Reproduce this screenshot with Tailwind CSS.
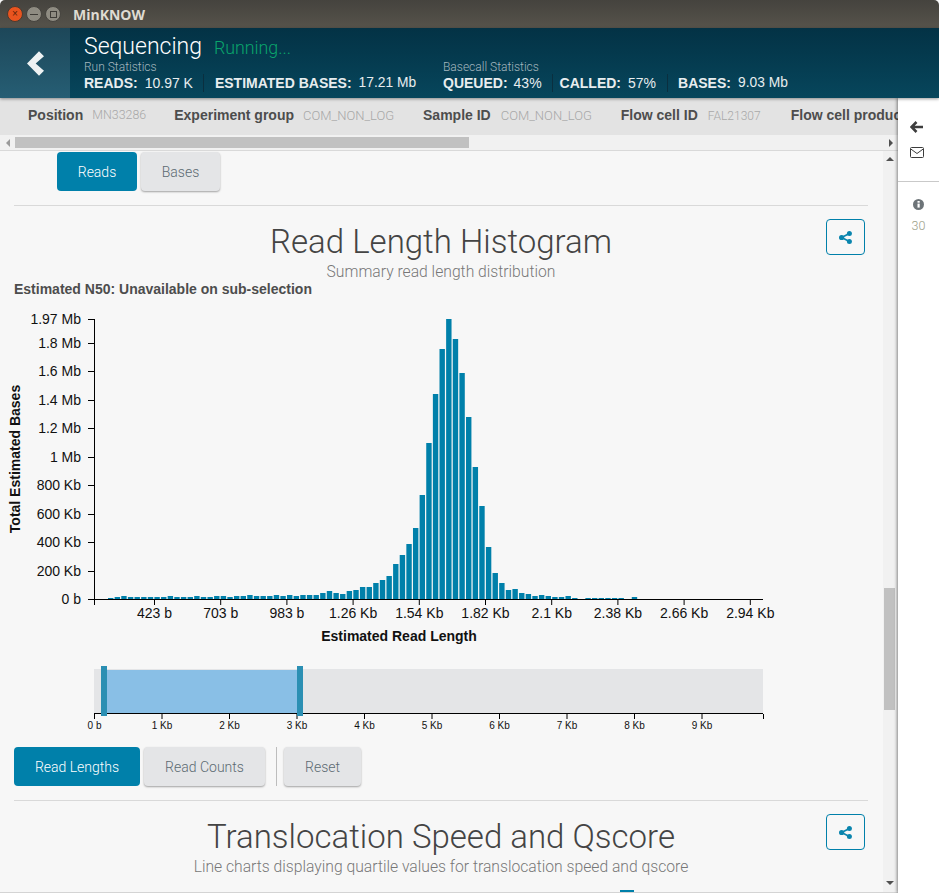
<!DOCTYPE html>
<html lang="en">
<head>
<meta charset="UTF-8">
<title>MinKNOW</title>
<script src="https://cdn.jsdelivr.net/npm/@tailwindcss/browser@4"></script>
</head>
<body class="w-[939px] h-[893px] overflow-hidden flex flex-col bg-[#f7f7f7] font-['Liberation_Sans',sans-serif]">

<!-- Window title bar -->
<div class="h-[28px] shrink-0 flex items-center pl-[7px] bg-gradient-to-b from-[#45433e] to-[#56534b] rounded-t-[5px]">
  <div class="w-[16px] h-[16px] rounded-full bg-[#e9541f] border border-[#4a3a30] flex items-center justify-center text-[10px] leading-none text-[#5a2208]">×</div>
  <div class="w-[16px] h-[16px] rounded-full bg-[#8f8c82] border border-[#45433e] ml-[3px] flex items-center justify-center"><div class="w-[8px] h-[1px] bg-[#3e3c37]"></div></div>
  <div class="w-[16px] h-[16px] rounded-full bg-[#8f8c82] border border-[#45433e] ml-[3px] flex items-center justify-center"><div class="w-[7px] h-[7px] border border-[#3e3c37]"></div></div>
  <span class="ml-[12px] text-[14px] font-bold text-[#dfdbd2] font-['Open_Sans',sans-serif]">MinKNOW</span>
</div>

<!-- Run header -->
<div class="relative z-20 h-[70px] shrink-0 flex bg-gradient-to-b from-[#033245] to-[#07465c] shadow-[0_1px_3px_rgba(0,0,0,0.4)] text-[#e8edef]">
  <div class="w-[70px] shrink-0 flex items-center justify-center pl-[1px] bg-gradient-to-b from-[#1d4759] to-[#265e74]">
    <svg width="17" height="25" viewBox="82 150 51 74"><polygon points="82,187 118,150 133,165 108,187 133,209 118,224" fill="#eef2f3"/></svg>
  </div>
  <div class="pl-[14px] pt-[2px] flex-1">
    <div class="flex items-baseline font-[Roboto] font-light h-[31px]">
      <span class="text-[23px] text-white">Sequencing</span>
      <span class="ml-[12px] text-[17.8px] text-[#0aa56c]">Running...</span>
    </div>
    <div class="flex">
      <div class="w-[359px]">
        <div class="h-[11px] text-[12px] leading-[13px] text-[#a4b7bf] font-[Roboto] font-light">Run Statistics</div>
        <div class="flex items-center h-[22px] text-[14px]">
          <b>READS:</b><span class="ml-[7px]">10.97 K</span>
          <div class="w-px h-[18px] bg-[#0a2f3f] ml-[10px] mr-[11px]"></div>
          <b>ESTIMATED BASES:</b><span class="ml-[7px] text-[13.8px]">17.21 Mb</span>
        </div>
      </div>
      <div>
        <div class="h-[11px] text-[12px] leading-[13px] text-[#a4b7bf] font-[Roboto] font-light">Basecall Statistics</div>
        <div class="flex items-center h-[22px] text-[14px]">
          <b>QUEUED:</b><span class="ml-[6px]">43%</span>
          <div class="w-px h-[18px] bg-[#0a2f3f] ml-[10px] mr-[7px]"></div>
          <b>CALLED:</b><span class="ml-[7px]">57%</span>
          <div class="w-px h-[18px] bg-[#0a2f3f] ml-[11px] mr-[10px]"></div>
          <b>BASES:</b><span class="ml-[7px] text-[13.8px]">9.03 Mb</span>
        </div>
      </div>
    </div>
  </div>
</div>

<div class="flex flex-1 min-h-0">
  <!-- Main column -->
  <div class="w-[898px] shrink-0 flex flex-col min-h-0 border-b border-[#d4d4d4]">
    <!-- Run info strip -->
    <div class="h-[37px] shrink-0 flex items-center pl-[28px] pb-[2px] bg-[#e3e3e3] overflow-hidden whitespace-nowrap text-[14px]">
      <b class="shrink-0 text-[#4d4d4d]">Position</b><span class="shrink-0 ml-[9px] w-[54px] text-[12.4px] text-[#a8a8a8] font-[Roboto] font-light">MN33286</span>
      <b class="shrink-0 ml-[28px] text-[#4d4d4d]">Experiment group</b><span class="shrink-0 ml-[9px] w-[92px] text-[13px] text-[#a8a8a8] font-[Roboto] font-light">COM_NON_LOG</span>
      <b class="shrink-0 ml-[28px] text-[#4d4d4d]">Sample ID</b><span class="shrink-0 ml-[10px] w-[92px] text-[13px] text-[#a8a8a8] font-[Roboto] font-light">COM_NON_LOG</span>
      <b class="shrink-0 ml-[28px] text-[#4d4d4d]">Flow cell ID</b><span class="shrink-0 ml-[10px] w-[54px] text-[12px] text-[#a8a8a8] font-[Roboto] font-light">FAL21307</span>
      <b class="shrink-0 ml-[29px] text-[#4d4d4d]">Flow cell product code</b>
    </div>
    <!-- Horizontal scrollbar -->
    <div class="h-[16px] shrink-0 flex items-center bg-[#f1f1f1] border-b border-[#d9d9d9]">
      <div class="w-[15px] flex justify-center"><div class="border-y-[4px] border-y-transparent border-r-[4px] border-r-[#9a9a9a]"></div></div>
      <div class="w-[454px] h-[11px] bg-[#c1c1c1]"></div>
      <div class="flex-1"></div>
      <div class="w-[15px] flex justify-center"><div class="border-y-[4px] border-y-transparent border-l-[4px] border-l-[#505050]"></div></div>
    </div>

    <div class="flex flex-1 min-h-0">
      <!-- Scrolled content -->
      <div class="w-[883px] shrink-0 overflow-hidden pl-[14px] pr-[15px]">
        <div class="flex gap-[4px] pl-[43px] pt-[1px] pb-[14px] border-b border-[#d9d9d9] text-[14px] font-[Roboto] font-light">
          <button class="w-[80px] h-[39px] pt-[2px] rounded-[4px] bg-[#0080aa] text-white">Reads</button>
          <button class="w-[79px] h-[39px] pt-[2px] rounded-[4px] bg-[#e4e5e7] text-[#5c6a72] shadow-[0_1px_2px_rgba(0,0,0,0.35)]">Bases</button>
        </div>

        <!-- Read length histogram -->
        <div class="relative text-center font-[Roboto] font-light pt-[16px]">
          <h2 class="text-[33px] leading-[40px] text-[#444]">Read Length Histogram</h2>
          <p class="text-[15.7px] leading-[20px] text-[#777]">Summary read length distribution</p>
          <button class="absolute right-[3px] top-[13px] w-[39px] h-[36px] rounded-[4px] border border-[#0080aa] flex items-center justify-center">
            <svg width="13" height="13" viewBox="0 0 13 13" fill="#0a85ae"><circle cx="2.6" cy="6.5" r="2.6"/><circle cx="10.4" cy="2.5" r="2.5"/><circle cx="10.4" cy="10.5" r="2.5"/><path d="M2.6 6.5 L10.4 2.5 M2.6 6.5 L10.4 10.5" stroke="#0a85ae" stroke-width="1.6"/></svg>
          </button>
        </div>
        <div class="text-[14px] leading-[16px] font-bold text-[#4d4d4d] -mt-[1px]">Estimated N50: Unavailable on sub-selection</div>

        <!-- Chart coordinates are window x and y -->
        <svg id="chart" class="block mt-[8px] -ml-[14px]" width="883" height="442" viewBox="0 305 883 442"></svg>

        <div class="flex items-stretch h-[39px] text-[14px] font-[Roboto] font-light">
          <button class="w-[126px] pt-[2px] rounded-[4px] bg-[#0080aa] text-white">Read Lengths</button>
          <button class="w-[121px] pt-[2px] ml-[4px] rounded-[4px] bg-[#e4e5e7] text-[#5c6a72] shadow-[0_1px_2px_rgba(0,0,0,0.35)]">Read Counts</button>
          <div class="w-px bg-[#bdbdbd] ml-[11px]"></div>
          <button class="w-[77px] pt-[2px] ml-[7px] rounded-[4px] bg-[#e4e5e7] text-[#5c6a72] shadow-[0_1px_2px_rgba(0,0,0,0.35)]">Reset</button>
        </div>
        <div class="h-px bg-[#d9d9d9] mt-[14px]"></div>

        <!-- Translocation speed -->
        <div class="relative text-center font-[Roboto] font-light pt-[16px]">
          <h2 class="text-[33px] leading-[40px] text-[#444]">Translocation Speed and Qscore</h2>
          <p class="text-[15.7px] leading-[20px] text-[#777]">Line charts displaying quartile values for translocation speed and qscore</p>
          <button class="absolute right-[3px] top-[13px] w-[39px] h-[36px] rounded-[4px] border border-[#0080aa] flex items-center justify-center">
            <svg width="13" height="13" viewBox="0 0 13 13" fill="#0a85ae"><circle cx="2.6" cy="6.5" r="2.6"/><circle cx="10.4" cy="2.5" r="2.5"/><circle cx="10.4" cy="10.5" r="2.5"/><path d="M2.6 6.5 L10.4 2.5 M2.6 6.5 L10.4 10.5" stroke="#0a85ae" stroke-width="1.6"/></svg>
          </button>
          <div class="w-[14px] h-[3px] bg-[#0080aa] ml-[606px] mt-[13px]"></div>
        </div>
      </div>

      <!-- Vertical scrollbar -->
      <div class="relative w-[15px] shrink-0 bg-[#f1f1f1]">
        <div class="absolute left-[3px] top-[6px] border-x-[4px] border-x-transparent border-b-[4px] border-b-[#505050]"></div>
        <div class="absolute left-[1px] top-[437px] w-[11px] h-[122px] bg-[#c1c1c1]"></div>
        <div class="absolute left-[3px] bottom-[7px] border-x-[4px] border-x-transparent border-t-[4px] border-t-[#505050]"></div>
      </div>
    </div>
  </div>

  <!-- Right rail -->
  <div class="relative z-10 w-[41px] shrink-0 bg-white shadow-[-1px_0_3px_rgba(0,0,0,0.45)] flex flex-col items-center">
    <div class="h-[84px] w-full border-b border-[#c9c9c9] flex flex-col items-center pt-[23px] pr-[4px]">
      <svg width="14" height="12" viewBox="0 0 14 12"><path d="M6.5 1 L1.5 6 L6.5 11 M2 6 H13" fill="none" stroke="#3d3d3d" stroke-width="2.6"/></svg>
      <svg class="mt-[14px]" width="14" height="11" viewBox="0 0 14 11"><rect x="0.5" y="0.5" width="13" height="10" rx="1" fill="none" stroke="#3d3d3d"/><path d="M0.8 2 L7 6.5 L13.2 2" fill="none" stroke="#3d3d3d"/></svg>
    </div>
    <svg class="mt-[17px]" width="11" height="11" viewBox="0 0 11 11"><circle cx="5.5" cy="5.5" r="5.5" fill="#6d7478"/><rect x="4.5" y="4.6" width="2.2" height="4" fill="#fff"/><rect x="4.5" y="2" width="2.2" height="1.7" fill="#fff"/></svg>
    <span class="mt-[7px] text-[12.5px] text-[#9c9e88] font-[Roboto] font-light">30</span>
  </div>
</div>

<script>
  // Bar heights in px, read off the histogram
  const heights = [1,2,3,2,2,2,2,2,2,3,2,2,2,3,2,2,3,3,2,3,3,4,3,3,3,4,3,4,3,4,4,4,6,8,6,5,8,9,12,12,16,19,23,35,44,55,71,104,156,205,250,280,260,226,182,132,93,52,26,16,9,10,6,5,3,4,3,2,2,3,1,0,1,1,1,1,1,1,0,2];
  const chart = document.getElementById('chart');
  let out = '';
  const line = (x1, y1, x2, y2, c) => `<line x1="${x1}" y1="${y1}" x2="${x2}" y2="${y2}" stroke="${c || '#000'}"/>`;
  const text = (x, y, s, size, anchor, extra) => `<text x="${x}" y="${y}" font-size="${size}" text-anchor="${anchor}" fill="#111" ${extra || ''}>${s}</text>`;

  heights.forEach((h, i) => {
    if (h) out += `<rect x="${108 + i * 6.63}" y="${599 - h}" width="5.4" height="${h}" fill="#0080aa"/>`;
  });

  // y axis
  out += line(94.5, 319, 94.5, 599.5);
  [['1.97 Mb',319],['1.8 Mb',343],['1.6 Mb',371],['1.4 Mb',400],['1.2 Mb',428],['1 Mb',457],['800 Kb',485],['600 Kb',514],['400 Kb',542],['200 Kb',571],['0 b',599]].forEach(([s, y]) => {
    out += line(88, y + .5, 94, y + .5) + text(81, y + 5, s, 14, 'end');
  });

  // x axis
  out += line(94, 599.5, 763, 599.5) + line(94.5, 600, 94.5, 605);
  ['423 b','703 b','983 b','1.26 Kb','1.54 Kb','1.82 Kb','2.1 Kb','2.38 Kb','2.66 Kb','2.94 Kb'].forEach((s, i) => {
    const x = 154.5 + i * 66.2;
    out += line(x, 600, x, 605) + text(x, 618, s, 14, 'middle');
  });
  out += text(399, 641, 'Estimated Read Length', 14, 'middle', 'font-weight="700"');
  out += text(0, 0, 'Total Estimated Bases', 14, 'middle', 'font-weight="700" transform="translate(20 459) rotate(-90)"');

  // brush
  out += `<rect x="94" y="669" width="669" height="44" fill="#e4e5e7"/>`;
  out += `<rect x="104" y="670" width="196" height="43" fill="#89bfe6"/>`;
  out += line(94, 713.5, 763, 713.5) + line(94.5, 714, 94.5, 719) + line(763.5, 714, 763.5, 719);
  ['0 b','1 Kb','2 Kb','3 Kb','4 Kb','5 Kb','6 Kb','7 Kb','8 Kb','9 Kb'].forEach((s, i) => {
    const x = 94.5 + i * 67.5;
    if (i) out += line(x, 714, x, 719);
    out += text(x, 729, s, 10, 'middle');
  });
  out += `<rect x="101" y="666" width="6" height="50" fill="#2b8fb3"/><rect x="297" y="666" width="6" height="50" fill="#2b8fb3"/>`;
  chart.innerHTML = out;
</script>
</body>
</html>
